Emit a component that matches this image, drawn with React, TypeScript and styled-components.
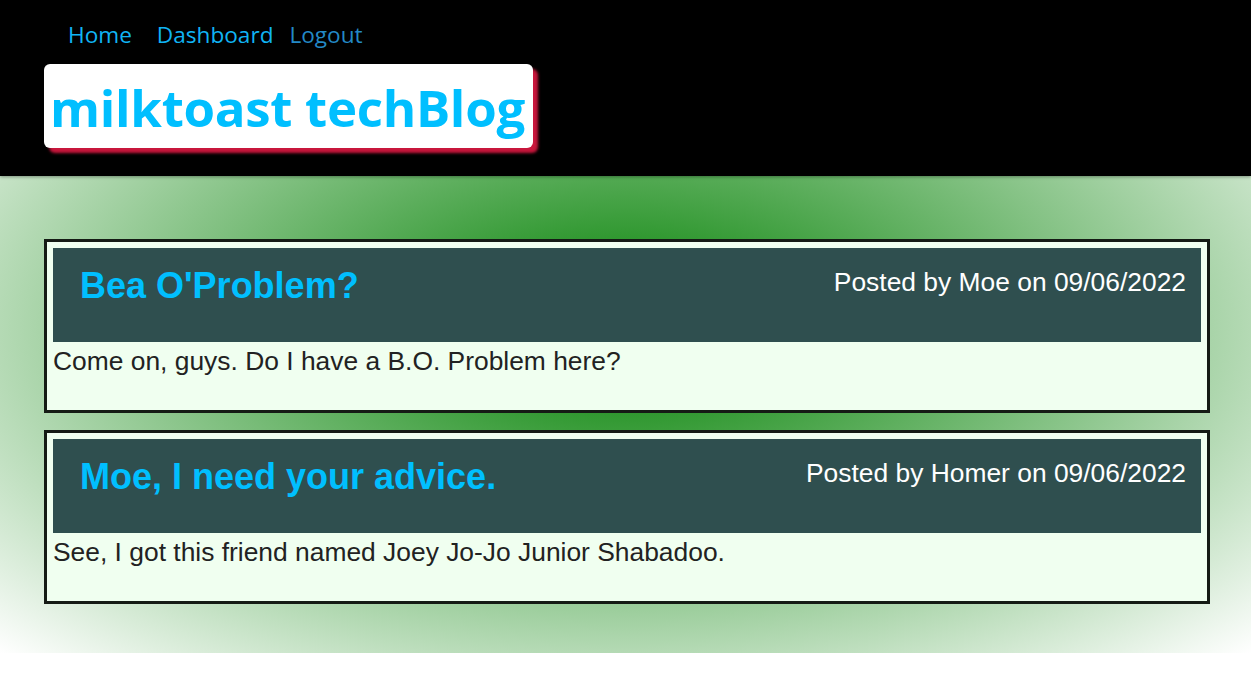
import React from "react";
import styled, { createGlobalStyle } from "styled-components";

const GlobalStyle = createGlobalStyle`
  html { background: #ffffff; }
  body { margin: 0; }
  * { box-sizing: border-box; }
`;

const Page = styled.div`
  background: radial-gradient(green, white);
  padding-bottom: 49px;
`;

const Header = styled.header`
  background: #000000;
  height: 176px;
  padding: 20px 0 0 44px;
  box-shadow: 0 1px 3px rgba(0, 0, 0, 0.35);
  display: flex;
  flex-direction: column;
  align-items: flex-start;
`;

const Nav = styled.nav`
  display: flex;
  margin-left: 24px;
  font-family: "Open Sans", "Noto Sans", sans-serif;
  font-size: 22.6px;
  line-height: 30px;
`;

const NavLink = styled.a<{ $space: number; $muted?: boolean }>`
  color: ${(p) => (p.$muted ? "#2389c6" : "#10b4f4")};
  text-decoration: none;
  margin-right: ${(p) => p.$space}px;
  cursor: pointer;
`;

const TitleBox = styled.div`
  margin-top: 14px;
  background: #ffffff;
  border-radius: 6px;
  box-shadow: 5px 5px 3px #c8163c;
  padding: 8px 8px 6px 6px;
`;

const SiteTitle = styled.h1`
  margin: 0;
  font-family: "Open Sans", "Noto Sans", sans-serif;
  font-weight: 700;
  font-size: 51px;
  line-height: 70px;
  letter-spacing: -0.3px;
  color: #00bfff;
`;

const Main = styled.main`
  padding: 63px 41px 0 44px;
  display: flex;
  flex-direction: column;
  gap: 17px;
`;

const Card = styled.article`
  border: 3px solid #151b15;
  background: #f0fff0;
  padding: 6px;
  font-family: "Liberation Sans", Arial, sans-serif;
`;

const CardHeader = styled.div`
  height: 94px;
  background: #2f4f4f;
  display: flex;
  justify-content: space-between;
  align-items: flex-start;
  padding: 0 15px 0 27px;
`;

const PostTitle = styled.h2`
  margin: 17px 0 0;
  font-size: 36px;
  line-height: 41px;
  font-weight: 700;
  color: #00bfff;
`;

const PostMeta = styled.div`
  margin-top: 19px;
  font-size: 26.4px;
  line-height: 30px;
  color: #ffffff;
`;

const PostBody = styled.p`
  margin: 4px 0 28px;
  font-size: 26.4px;
  line-height: 30px;
  color: #222222;
`;

const posts = [
  {
    title: "Bea O'Problem?",
    author: "Moe",
    date: "09/06/2022",
    body: "Come on, guys. Do I have a B.O. Problem here?",
  },
  {
    title: "Moe, I need your advice.",
    author: "Homer",
    date: "09/06/2022",
    body: "See, I got this friend named Joey Jo-Jo Junior Shabadoo.",
  },
];

export default function App() {
  return (
    <>
      <GlobalStyle />
      <Page>
        <Header>
          <Nav>
            <NavLink $space={25}>Home</NavLink>
            <NavLink $space={16}>Dashboard</NavLink>
            <NavLink $space={0} $muted>
              Logout
            </NavLink>
          </Nav>
          <TitleBox>
            <SiteTitle>milktoast techBlog</SiteTitle>
          </TitleBox>
        </Header>
        <Main>
          {posts.map((p) => (
            <Card key={p.title}>
              <CardHeader>
                <PostTitle>{p.title}</PostTitle>
                <PostMeta>
                  Posted by {p.author} on {p.date}
                </PostMeta>
              </CardHeader>
              <PostBody>{p.body}</PostBody>
            </Card>
          ))}
        </Main>
      </Page>
    </>
  );
}
